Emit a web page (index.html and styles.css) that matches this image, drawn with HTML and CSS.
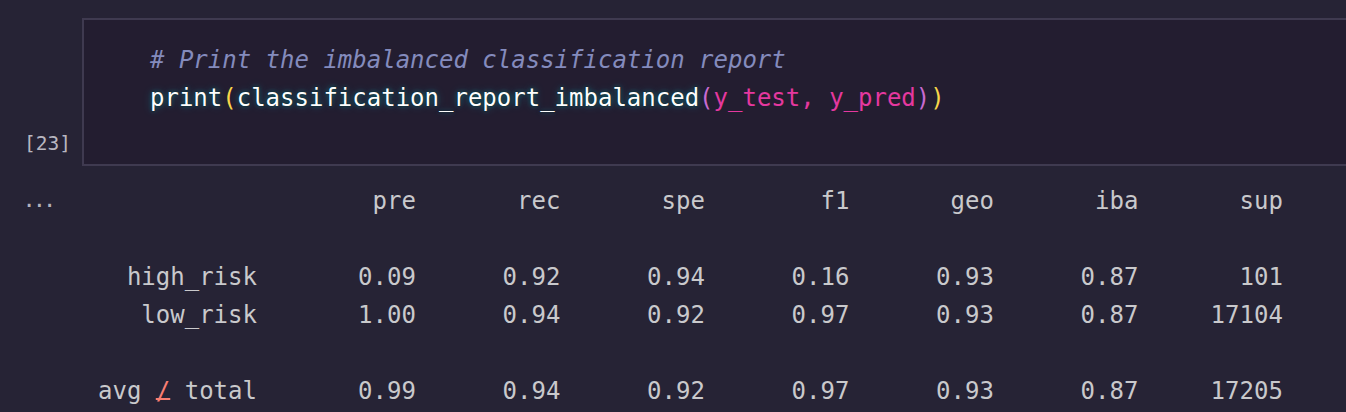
FILE: index.html
```html
<!DOCTYPE html>
<html>
<head>
<meta charset="utf-8">
<link rel="stylesheet" href="styles.css">
</head>
<body>
<div class="cell">
  <div class="gutter"><span class="exec-count">[23]</span></div>
  <div class="editor">
    <div class="code-line"><span class="comment"># Print the imbalanced classification report</span></div>
    <div class="code-line"><span class="fn">print</span><span class="br1">(</span><span class="fn">classification_report_imbalanced</span><span class="br2">(</span><span class="arg">y_test, y_pred</span><span class="br2">)</span><span class="br1">)</span></div>
  </div>
</div>
<div class="output">
  <div class="out-gutter"><span class="ellipsis">...</span></div>
  <div class="out-text">
    <div class="out-line">                   pre       rec       spe        f1       geo       iba       sup</div>
    <div class="out-line blank"></div>
    <div class="out-line">  high_risk       0.09      0.92      0.94      0.16      0.93      0.87       101</div>
    <div class="out-line">   low_risk       1.00      0.94      0.92      0.97      0.93      0.87     17104</div>
    <div class="out-line blank"></div>
    <div class="out-line"><span class="lbl">avg </span><span class="slash">/</span><span class="lbl"> total       0.99      0.94      0.92      0.97      0.93      0.87     17205</span></div>
  </div>
</div>
</body>
</html>
```

FILE: styles.css
```css
html, body {
  margin: 0;
  padding: 0;
}
body {
  background: #262335;
  width: 1346px;
  height: 412px;
  overflow: hidden;
}
.cell {
  display: flex;
  margin-top: 18px;
}
.gutter {
  width: 82px;
  flex: none;
  display: flex;
  justify-content: flex-end;
  align-items: flex-end;
  box-sizing: border-box;
  padding-right: 11px;
  padding-bottom: 11px;
}
.exec-count {
  font-family: "DejaVu Sans Mono", monospace;
  font-size: 19.5px;
  line-height: 22px;
  color: #b8b6c0;
}
.editor {
  flex: none;
  width: 1300px;
  box-sizing: border-box;
  background: #231d30;
  border: 2px solid #3f3a50;
  padding: 21px 0 47px 66px;
}
.code-line {
  font-family: "DejaVu Sans Mono", monospace;
  font-size: 24px;
  line-height: 38px;
  white-space: pre;
  color: #fdfdfd;
}
.comment {
  color: #848bbd;
  font-style: italic;
}
.fn {
  color: #fdfdfd;
  text-shadow: 0 0 2px #001716, 0 0 4px rgba(3, 237, 249, 0.35), 0 0 10px rgba(3, 237, 249, 0.28);
}
.br1 {
  color: #f8d64a;
}
.br2 {
  color: #c86bd0;
}
.arg {
  color: #e5389f;
}
.output {
  display: flex;
  margin-top: 16px;
}
.out-gutter {
  width: 82px;
  flex: none;
  box-sizing: border-box;
  padding-left: 24px;
  font-family: "DejaVu Sans Mono", monospace;
  font-size: 17px;
  font-weight: bold;
  line-height: 38px;
  color: #b3b1bc;
}
.out-text {
  padding-left: 16px;
  font-family: "DejaVu Sans Mono", monospace;
  font-size: 24px;
  line-height: 38px;
  color: #c9c9cc;
}
.out-line {
  white-space: pre;
  height: 38px;
}
.slash {
  color: #f97e72;
  text-decoration: underline;
  text-decoration-thickness: 2px;
  text-underline-offset: -1px;
}
```
